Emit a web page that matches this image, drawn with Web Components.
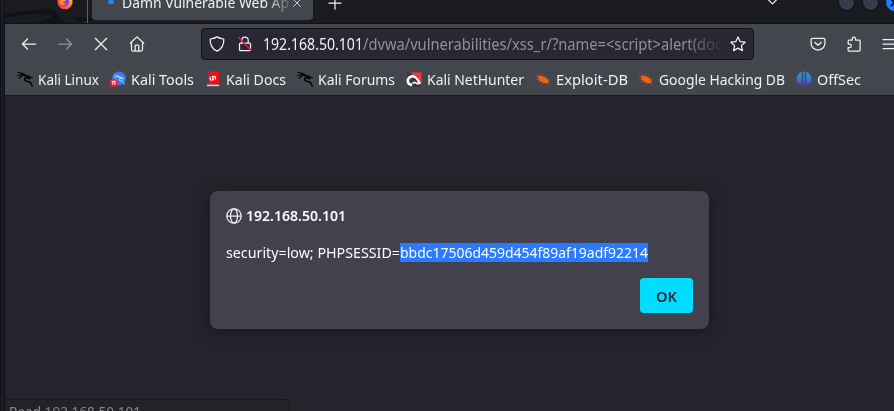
<!DOCTYPE html>
<html lang="en"><head><meta charset="utf-8"><title>Browser alert</title>
<style>
body{margin:0;width:894px;height:411px;overflow:hidden;background:#191a21;font-family:"Noto Sans","Open Sans",sans-serif;color:#f0f0f1}
</style></head><body><browser-window></browser-window>
<script>
const define=(name,html,after)=>customElements.define(name,class extends HTMLElement{
  constructor(){super();this.attachShadow({mode:'open'}).innerHTML=html;}
  connectedCallback(){if(after)after(this,this.shadowRoot);}
});

/* A single line condensed to span the width given in w. */
define('fit-text',`<style>:host{display:block;white-space:pre;overflow:visible;flex:none}span{display:inline-block;transform-origin:0 50%}</style><span><slot></slot></span>`,(el,root)=>{
  const s=root.querySelector('span'),w=+el.getAttribute('w');
  el.style.width=w+'px';
  s.style.transform='scaleX('+w/s.getBoundingClientRect().width+')';
});

const dragon=c=>`<g fill="none" stroke="${c}" stroke-linecap="round" stroke-linejoin="round"><path d="M.8 1.2 6 2.6 10.5 5.2M.8 4.5 4 3.6 8 4.6M2 7.2 4.5 5.2" stroke-width="1.1"/><path d="M5 3.8 10 5.1 12.8 6.6 13 7.7 9.3 6.7C6.8 7 7 9.6 9.3 10.2L12.6 11C14.3 11.8 14.5 13.4 15.2 15.2" stroke-width="1.5"/><path d="m12 4.8 3.3 2.4" stroke-width="1"/></g>`;
const line='fill="none" stroke="#f0f0f3" stroke-width="1.25" stroke-linecap="round" stroke-linejoin="round"';
const bug='<g><path d="M2.5 5Q7 3.8 10.5 6.5L14 10 12.5 12.5Q8 12.5 4.5 9.8Z" fill="#f26110"/><path d="m.8 4.8 3.5 1M3.4 2.8l2.3 2.4M7 3.4l.7 1.7M10 4.6l.3 1.8M1.2 8.2l3 .2M2.8 11l3-.7M7 13.4l1.2-2M10.7 7.4l4.3.8M12 12l2.5 2.2" fill="none" stroke="#b85528" stroke-width=".9"/></g>';
const icons={
 back:`<path ${line} d="M14.5 8H1.5M6.5 3 1.5 8l5 5"/>`,
 forward:`<path ${line} d="M1.5 8h13M9.5 3l5 5-5 5"/>`,
 close:`<path ${line} d="m2.3 2.3 11.4 11.4M13.7 2.3 2.3 13.7"/>`,
 home:`<path ${line} d="M1.2 7.2 8 .9l6.8 6.3M2.5 6.4v7.1q0 1.5 1.5 1.5h8q1.5 0 1.5-1.5V6.4M6.2 15V9.8q0-.8.8-.8h2q.8 0 .8.8V15"/>`,
 shield:`<path ${line} d="M8 .9Q5.5 2.5 1.2 3C1 8 3.3 13 8 15.1 12.7 13 15 8 14.8 3Q10.5 2.5 8 .9Z"/>`,
 lock:`<path ${line} d="M4.8 7V4.2a3.2 3.2 0 0 1 6.4 0V7M3.5 7h9q1 0 1 1v5.7q0 1-1 1h-9q-1 0-1-1V8q0-1 1-1Z"/><path d="m1.2 1.2 13.4 13.6" stroke="#e5123f" stroke-width="1.5"/>`,
 star:`<path ${line} d="m8 1 2.1 4.6 5 .6-3.7 3.4 1 5L8 12.1l-4.4 2.5 1-5L.9 6.2l5-.6Z"/>`,
 pocket:`<path ${line} d="M2.4 2.3h11.2q1.3 0 1.3 1.3v3.7C14.9 11 12 14 8 14S1.1 11 1.1 7.3V3.6q0-1.3 1.3-1.3ZM4.8 6.3 8 9.2l3.2-2.9"/>`,
 puzzle:`<path ${line} d="M2.2 7V5q0-.9.9-.9h3.2V2.7a1.6 1.6 0 0 1 3.2 0v1.4h3.7q.9 0 .9.9v9q0 1-.9 1H3q-.9 0-.9-1v-2.4h1.5a1.8 1.8 0 0 0 0-3.6H2.2Z"/>`,
 menu:`<path ${line} d="M1 3.5h14M1 8h14M1 12.5h14"/>`,
 globe:`<g ${line}><circle cx="8" cy="8" r="7.2"/><ellipse cx="8" cy="8" rx="3.5" ry="7.2"/><path d="M1 8h14"/></g>`,
 kali:dragon('#050507'),
 tools:`<circle cx="9" cy="7.4" r="6.9" fill="#317cf0"/><g transform="translate(4 3) scale(.66)">${dragon('#b9daff')}</g><rect y="8.2" width="7.4" height="7.6" rx="2.5" fill="#ec1c2f"/><path d="M1.6 10.3h4.3M2.8 10.3v3.5M4.9 10.3v3.5" stroke="#fff" stroke-width="1" fill="none"/>`,
 docs:`<path fill="#ed1015" d="M3 .5h11v13H3z"/><path fill="#264a91" d="M1.5.5h2v14h-2z"/><path d="M2 13.6h12v1.6H2z" fill="#e0c9cc"/><path d="M5.2 5.8q-.6 3.6 1.3 3.4 1.2-.2 1.3-2 .2-1.9 1.5-1.8 1.6.1 1.2 3.2M7 5l2 4.4" stroke="#fff" stroke-width="1.1" fill="none"/>`,
 nethunter:`<path fill="#ee3940" d="M5 1.5h10.5V12L13 13.5z"/><path d="M.8 1.5 5 4M1 4.5l3 1" stroke="#27272b"/><path d="M6 14Q2 13.2 1.7 10.5C1.5 7.3 4.3 4.8 7.6 5.4 10.3 6 11.5 8.5 14 13" fill="none" stroke="#fff" stroke-width="2.4"/><path d="M5 11q2-3.4 4-2.6l1.8 2.3M7 14.8h8" fill="none" stroke="#222" stroke-width="1.1"/><path d="M6.5 12.5q2.3-2.5 5.5 1" stroke="#fff" fill="none" stroke-width="1.5"/>`,
 bug,
 offsec:`<defs><linearGradient id="g" gradientUnits="userSpaceOnUse" x1="0" x2="0" y1="0" y2="16"><stop stop-color="#17a9bc"/><stop offset=".5" stop-color="#3677da"/><stop offset="1" stop-color="#5429b9"/></linearGradient></defs><path fill="url(#g)" d="M5.8.8v14Q.5 13 .5 8T5.8.8Zm1.4-.3h1.6v15H7.2Zm3 .3Q15.5 3 15.5 8t-5.3 6.8Z"/>`,
 firefox:`<defs><linearGradient id="f" x1="1" x2="0" y2="1"><stop stop-color="#ffe23e"/><stop offset=".45" stop-color="#ff7b29"/><stop offset="1" stop-color="#f3206f"/></linearGradient></defs><path d="M15.5 6.5A7.6 7.6 0 1 1 .5 6.5L3 1 8 3l3-3Z" fill="url(#f)"/><circle cx="7.8" cy="7.7" r="4.2" fill="#7a42e2"/><path d="M3 4q4 0 5.8 2.2-.5 1.5-3.2 1.8 1 2.3 4.2 1.5-3.6 3-6.4.2Z" fill="#ff9a25"/>`,
 plus:`<path ${line} d="M8 2v12M2 8h12"/>`,
 down:`<path ${line} d="m3 5.5 5 5 5-5"/>`
};
define('ui-icon',`<style>:host{display:block;flex:none;width:16px;height:16px}svg{display:block;width:100%;height:100%;overflow:visible}</style><svg viewBox="0 0 16 16"></svg>`,(el,root)=>{root.querySelector('svg').innerHTML=icons[el.getAttribute('name')];});

define('window-orb',`<style>:host{display:grid;place-items:center;flex:none;box-sizing:border-box;width:17px;height:17px;border-radius:50%;background:#363c4a;border:1px solid #08090c}:host([closer]){background:#2777ff;border-color:#2777ff}svg{display:none}:host([closer]) svg{display:block}</style><svg width="9" height="9"><path d="m1 1 7 7M8 1 1 8" stroke="#101a35" stroke-width="2"/></svg>`);

define('tab-strip',`<style>
:host{display:block;height:23px;background:#1a1b20;overflow:hidden;position:relative;border-bottom:1px solid #101116}
.art{position:absolute;left:0;top:0}
.row{display:flex;height:40px;margin-top:-20px;position:relative}
.row>*,.tab>*{flex:none}
.pin{box-sizing:border-box;width:83px;border-right:1px solid #606166;padding:14px 0 0 52px;height:44px}
.tab{box-sizing:border-box;margin-left:4px;width:221px;height:40px;border-radius:4px;background:#43464c;display:flex;padding:12px 0 0 16px;font-size:15px;line-height:20px}
.dot{width:6px;height:4px;border-radius:3px;background:#178bff;margin-top:8px;margin-right:8px}
.title{width:168px;-webkit-mask:linear-gradient(90deg,#000 142px,transparent 172px);mask:linear-gradient(90deg,#000 142px,transparent 172px)}
.x{width:10px;height:10px;margin:6px 0 0 2px}
.plus{margin:15px 0 0 14px}
.down{margin:14px 0 0 422px;width:15px;height:15px}
.orbs{display:flex;gap:7px;margin:14px 0 0 58px}
</style><svg class="art" width="310" height="23"><path d="M0 14Q28 9 49 10l11 13h-8l-7-8Q18 13 0 18M28 23l18-5 7 5M65 17l30 2-20 3" fill="#111217"/></svg>
<div class="row"><div class="pin"><ui-icon name="firefox"></ui-icon></div><div class="tab"><i class="dot"></i><div class="title"><fit-text w="167">Damn Vulnerable Web Ap</fit-text></div><ui-icon class="x" name="close"></ui-icon></div><ui-icon class="plus" name="plus"></ui-icon><ui-icon class="down" name="down"></ui-icon><div class="orbs"><window-orb></window-orb><window-orb></window-orb><window-orb closer></window-orb></div></div>`);

define('address-bar',`<style>
:host{box-sizing:border-box;display:flex;flex:none;align-items:center;width:553px;height:32px;border:1px solid #12131a;border-radius:4px;background:#272834;padding:0 7px;font-size:15.5px;line-height:20px}
.shield{margin-right:12px}.lock{margin-right:10px}
.path{color:#8f9098;flex:none;width:359px;-webkit-mask:linear-gradient(90deg,#000 322px,transparent 361px);mask:linear-gradient(90deg,#000 322px,transparent 361px)}
.star{margin-left:auto}
</style><ui-icon class="shield" name="shield"></ui-icon><ui-icon class="lock" name="lock"></ui-icon><fit-text w="100">192.168.50.101</fit-text><div class="path"><fit-text w="359">/dvwa/vulnerabilities/xss_r/?name=&lt;script&gt;alert(doc</fit-text></div><ui-icon class="star" name="star"></ui-icon>`);

define('nav-bar',`<style>
:host{display:flex;align-items:center;height:40px;padding-left:16px}
.b{margin-right:20px}.home{margin-right:56px}.stop{margin-right:20px}.fwd{opacity:.45}
.pocket{margin:0 20px 0 56px}.menu{margin-left:20px}
</style><ui-icon class="b" name="back"></ui-icon><ui-icon class="b fwd" name="forward"></ui-icon><ui-icon class="stop" name="close"></ui-icon><ui-icon class="home" name="home"></ui-icon><address-bar></address-bar><ui-icon class="pocket" name="pocket"></ui-icon><ui-icon name="puzzle"></ui-icon><ui-icon class="menu" name="menu"></ui-icon>`);

define('bookmark-item',`<style>:host{display:flex;align-items:center;gap:5px;flex:none;font-size:15px;line-height:20px}</style><ui-icon></ui-icon><slot></slot>`,(el,root)=>{
  const i=root.querySelector('ui-icon'),n=document.createElement('ui-icon');n.setAttribute('name',el.getAttribute('icon'));i.replaceWith(n);
});
const marks=[['kali','Kali Linux',61,93],['tools','Kali Tools',63,95],['docs','Kali Docs',60,92],['kali','Kali Forums',77,109],['nethunter','Kali NetHunter',97,129],['bug','Exploit-DB',72,103],['bug','Google Hacking DB',126,158],['offsec','OffSec',44,80]];
define('bookmark-bar',`<style>:host{display:flex;align-items:center;height:30px;padding-left:12px}</style>${marks.map(([i,t,w,s])=>`<bookmark-item icon="${i}" style="width:${s}px"><fit-text w="${w}">${t}</fit-text></bookmark-item>`).join('')}`);

define('alert-dialog',`<style>
:host{box-sizing:border-box;display:flex;flex:none;flex-direction:column;width:499px;height:138px;padding:15px 16px 16px;border-radius:8px;background:#42414d;color:#fbfbfe;box-shadow:0 2px 14px rgba(12,12,15,.5);font-size:15px;line-height:19px}
.head{display:flex;align-items:center;gap:4px;height:19px;font-weight:600}
.head ui-icon{width:16px;height:16px}
.msg{display:flex;margin-top:18px}.sel{background:#2a7bff}
button{box-sizing:border-box;align-self:flex-end;margin-top:auto;width:53px;height:35px;border:0;border-radius:4px;background:#00ddff;color:#2b2a33;font:600 15px/20px "Noto Sans",sans-serif;padding:0 16px}
</style><div class="head"><ui-icon name="globe"></ui-icon><fit-text w="100">192.168.50.101</fit-text></div>
<div class="msg"><fit-text w="174">security=low; PHPSESSID=</fit-text><fit-text class="sel" w="248">bbdc17506d459d454f89af19adf92214</fit-text></div><button><fit-text w="21">OK</fit-text></button>`);

define('status-label',`<style>:host{box-sizing:border-box;display:block;width:285px;height:24px;padding:1px 4px;border:1px solid #17171c;border-left:0;border-radius:0 5px 0 0;background:#232229;color:#85858b;font-size:15px;line-height:20px}</style><fit-text w="132">Read 192.168.50.101</fit-text>`);

define('page-view',`<style>:host{box-sizing:border-box;display:flex;flex-direction:column;height:315px;background:#25242c;padding-top:95px}alert-dialog{margin-left:205px}status-label{margin-top:70px;flex:none}</style><alert-dialog></alert-dialog><status-label></status-label>`);

define('browser-window',`<style>
:host{box-sizing:border-box;display:block;width:894px;height:411px;padding-left:5px;overflow:hidden;background:linear-gradient(90deg,#10111a 0 1px,#1c1c26 1px 4px,#101118 4px 5px,transparent 5px)}
.chrome{background:#43464c;border-bottom:1px solid #17181d;height:71px;overflow:hidden}
nav-bar,bookmark-bar{width:889px;box-sizing:border-box}
</style><tab-strip></tab-strip><div class="chrome"><nav-bar></nav-bar><bookmark-bar></bookmark-bar></div><page-view></page-view>`);
</script></body></html>
